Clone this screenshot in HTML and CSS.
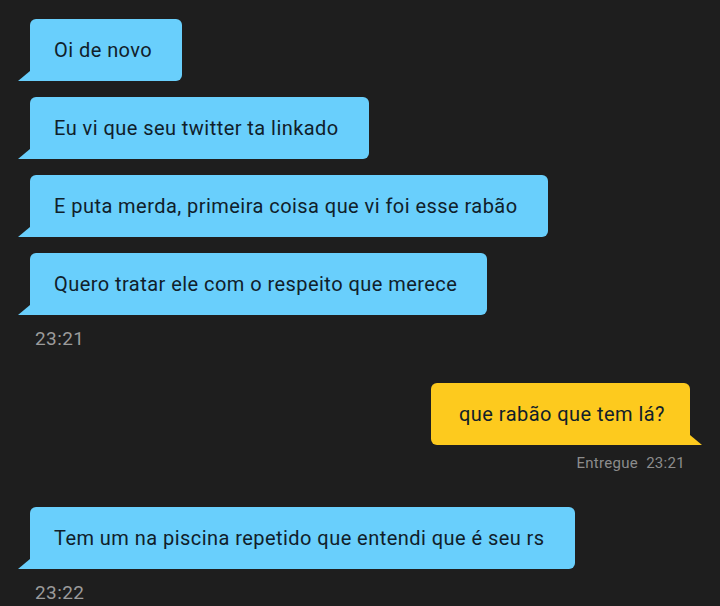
FILE: index.html
```html
<!DOCTYPE html>
<html lang="pt-BR">
<head>
  <meta charset="UTF-8">
  <meta name="viewport" content="width=device-width, initial-scale=1.0">
  <title>Conversa</title>
  <link rel="stylesheet" href="styles.css">
</head>
<body>

  <div class="chat">
    <!-- Mensagens recebidas -->
    <div class="group in">
      <div class="bubble">Oi de novo</div>
      <div class="bubble">Eu vi que seu twitter ta linkado</div>
      <div class="bubble">E puta merda, primeira coisa que vi foi esse rabão</div>
      <div class="bubble">Quero tratar ele com o respeito que merece</div>
      <div class="time">23:21</div>
    </div>

    <!-- Mensagem enviada -->
    <div class="group out">
      <div class="bubble">que rabão que tem lá?</div>
      <div class="status">Entregue&nbsp;&nbsp;23:21</div>
    </div>

    <div class="group in">
      <div class="bubble">Tem um na piscina repetido que entendi que é seu rs</div>
      <div class="time">23:22</div>
    </div>
  </div>

</body>
</html>
```

FILE: styles.css
```css
/* Global Styles */
body {
  margin: 0;
  padding: 0;
  background: #1e1e1e;
  font-family: 'Roboto', 'DejaVu Sans', sans-serif;
  height: 100vh;
  overflow: hidden;
}

.chat {
  display: flex;
  flex-direction: column;
  padding: 19px 30px 0 30px;
}

.group {
  display: flex;
  flex-direction: column;
  gap: 16px;
}

.group.in {
  align-items: flex-start;
}

.group.out {
  align-items: flex-end;
  margin-top: 33px;
  gap: 9px;
}

.bubble {
  position: relative;
  font-size: 20px;
  line-height: 26px;
  padding: 18px 30px 18px 24px;
  border-radius: 6px;
  color: #10202a;
  letter-spacing: 0.45px;
}

/* little tail at the bottom corner */
.bubble::after {
  content: "";
  position: absolute;
  bottom: 0;
  width: 12px;
  height: 10px;
}

.in .bubble {
  background: #69cffc;
  border-bottom-left-radius: 0;
}

.in .bubble::after {
  left: -12px;
  background: #69cffc;
  clip-path: polygon(100% 0, 100% 100%, 0 100%);
}

.out .bubble {
  background: #fdca1e;
  border-bottom-right-radius: 0;
  padding: 18px 25px 18px 28px;
}

.out .bubble::after {
  right: -12px;
  background: #fdca1e;
  clip-path: polygon(0 0, 100% 100%, 0 100%);
}

.time {
  margin-top: -3px;
  margin-left: 5px;
  font-size: 19px;
  line-height: 22px;
  color: #9b9b9b;
  letter-spacing: 0.4px;
}

.status {
  font-size: 15px;
  line-height: 18px;
  color: #8c8c8c;
  margin-right: 5px;
  letter-spacing: 0.3px;
}

.out + .group.in {
  margin-top: 35px;
}
```
